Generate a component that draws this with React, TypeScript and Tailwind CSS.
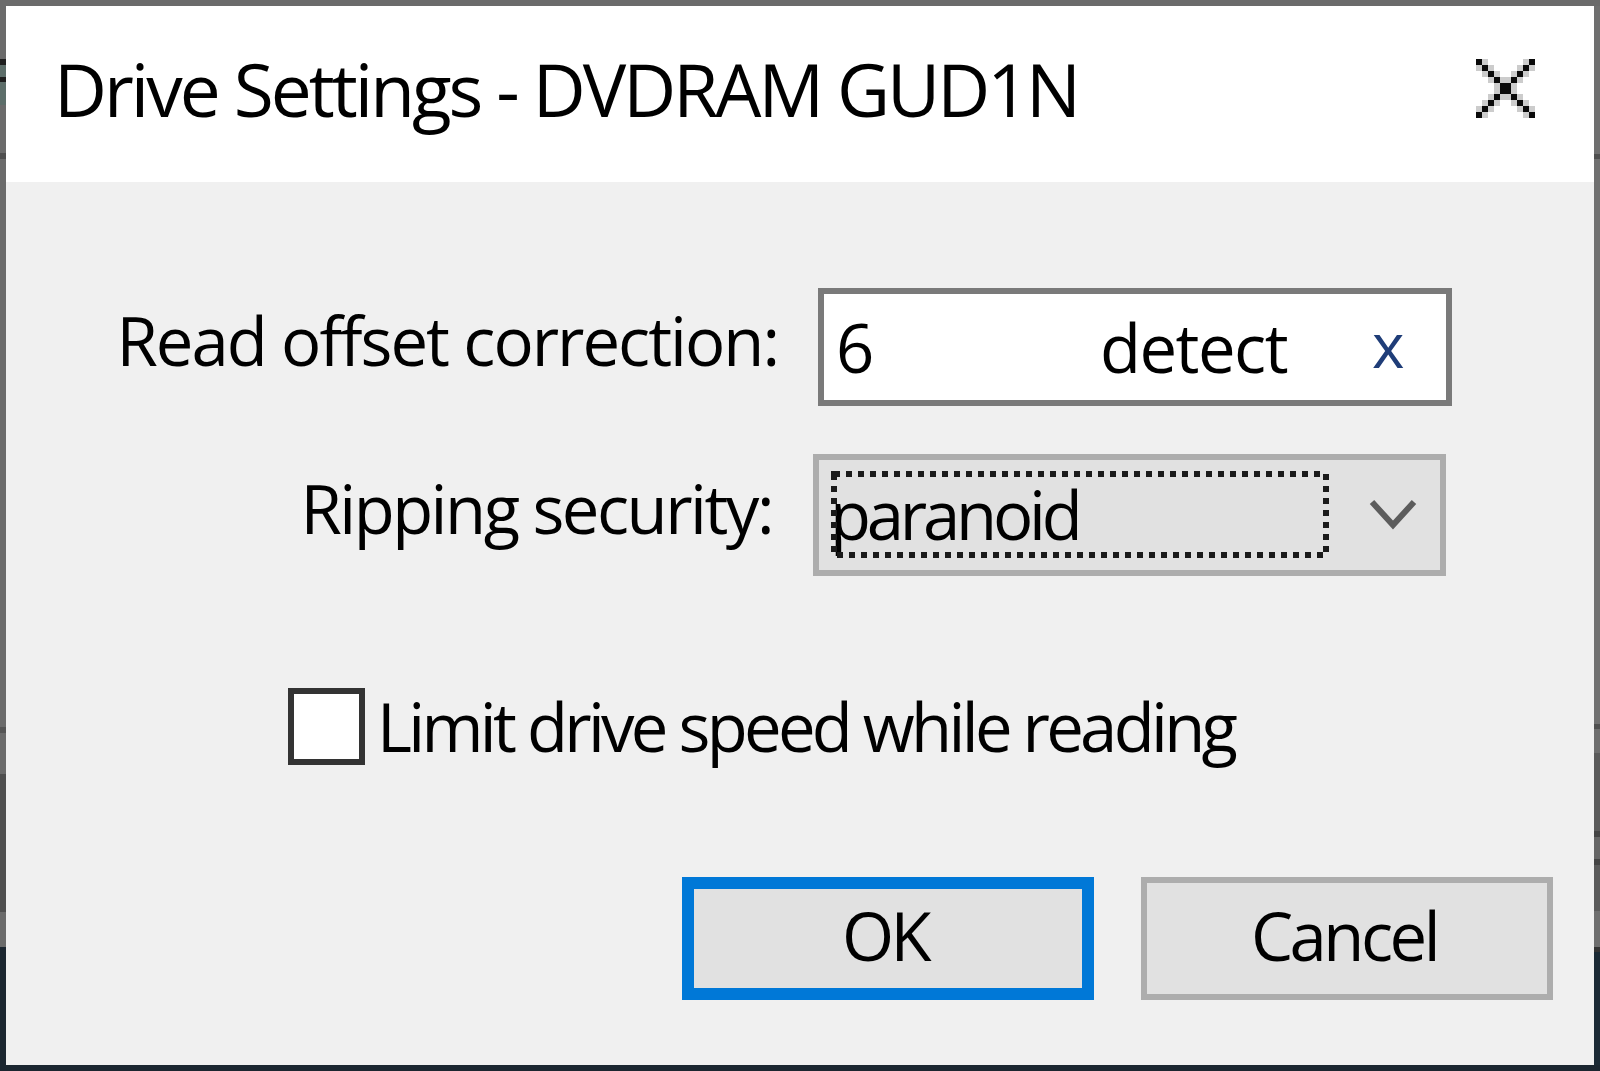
import React from "react";

function CloseX() {
  const black: [number, number][] = [];
  for (let i = 0; i < 10; i++) {
    black.push([i, i]);
    black.push([9 - i, i]);
  }
  const gray: [number, number][] = [];
  black.forEach(([x, y]) => {
    if (x - 1 >= 0) gray.push([x - 1, y]);
    if (x + 1 <= 9) gray.push([x + 1, y]);
  });
  return (
    <svg width="59" height="59" viewBox="0 0 10 10" shapeRendering="crispEdges">
      {gray.map(([x, y], i) => (
        <rect key={"g" + i} x={x} y={y} width="1" height="1" fill="#cccccc" />
      ))}
      {black.map(([x, y], i) => (
        <rect key={"b" + i} x={x} y={y} width="1" height="1" fill="#0a0a0a" />
      ))}
    </svg>
  );
}

function Chevron() {
  return (
    <svg width="48" height="32" viewBox="0 0 48 32">
      <polyline points="3,3 24,26 45,3" fill="none" stroke="#5c5c5c" strokeWidth="6" strokeLinejoin="miter" />
    </svg>
  );
}

export default function App() {
  return (
    <div className="w-[1600px] h-[1071px] flex flex-col overflow-hidden font-['Open_Sans','Noto_Sans',sans-serif] text-black">
      <div className="h-[6px] flex-none bg-[#6b6b6b]" />
      <div className="flex-1 flex flex-row min-h-0">
        {/* left strip */}
        <div className="w-[6px] flex-none flex flex-col">
          <div className="h-[53px] flex-none bg-[#6b6b6b]" />
          <div className="h-[6px] flex-none bg-[#1f1f1f]" />
          <div className="h-[12px] flex-none bg-[#5d6e6a]" />
          <div className="h-[5px] flex-none bg-[#1f1f1f]" />
          <div className="h-[23px] flex-none bg-[#5d6e6a]" />
          <div className="h-[48px] flex-none bg-[#6b6b6b]" />
          <div className="h-[6px] flex-none bg-[#4f4f4f]" />
          <div className="h-[568px] flex-none bg-[#6b6b6b]" />
          <div className="h-[6px] flex-none bg-[#555555]" />
          <div className="h-[41px] flex-none bg-[#6b6b6b]" />
          <div className="h-[138px] flex-none bg-[#4f4f4f]" />
          <div className="h-[35px] flex-none bg-[#6b6b6b]" />
          <div className="flex-1 bg-[#1b2630]" />
        </div>

        {/* dialog */}
        <div className="flex-1 flex flex-col min-w-0">
          <div className="h-[176px] flex-none bg-white flex flex-row items-start">
            <div className="pl-[48px] pt-[46px] text-[73px] leading-none tracking-[-3px] whitespace-nowrap">
              Drive Settings - DVDRAM GUD1N
            </div>
            <div className="ml-auto mr-[59px] mt-[53px]">
              <CloseX />
            </div>
          </div>

          <div className="flex-1 bg-[#f0f0f0] flex flex-col">
            {/* row 1 */}
            <div className="mt-[106px] h-[118px] flex flex-row items-center">
              <div className="w-[772px] text-right text-[67px] leading-none tracking-[-2px] whitespace-nowrap pb-[14px]">
                Read offset correction:
              </div>
              <div className="ml-[40px] w-[634px] h-[118px] border-[6px] border-[#7a7a7a] bg-white flex flex-row items-center text-[67px] leading-none whitespace-nowrap">
                <span className="pl-[12px] w-[276px] flex-none">6</span>
                <span className="w-[272px] flex-none tracking-[-1.5px]">detect</span>
                <span className="text-[62px] text-[#1f3d78] pb-[6px]">x</span>
              </div>
            </div>

            {/* row 2 */}
            <div className="mt-[48px] h-[122px] flex flex-row items-center">
              <div className="w-[766px] text-right text-[67px] leading-none tracking-[-2.5px] whitespace-nowrap pb-[14px]">
                Ripping security:
              </div>
              <div className="ml-[41px] w-[633px] h-[122px] border-[6px] border-[#adadad] bg-[#e1e1e1] relative flex flex-row items-center">
                <span className="pl-[11px] text-[67px] leading-none tracking-[-4.2px] whitespace-nowrap pb-[2px]">paranoid</span>
                <svg className="absolute left-[12px] top-[11px]" width="498" height="87" shapeRendering="crispEdges">
                  <rect x="3" y="3" width="492" height="81" fill="none" stroke="#1a1a1a" strokeWidth="6" strokeDasharray="6 6" />
                </svg>
                <div className="absolute left-[550px] top-[39px]">
                  <Chevron />
                </div>
              </div>
            </div>

            {/* row 3 */}
            <div className="mt-[112px] h-[77px] flex flex-row items-center pl-[282px]">
              <div className="w-[77px] h-[77px] flex-none border-[6px] border-[#333333] bg-white" />
              <div className="ml-[12px] text-[67px] leading-none tracking-[-3.7px] whitespace-nowrap">
                Limit drive speed while reading
              </div>
            </div>

            {/* row 4 */}
            <div className="mt-[112px] flex flex-row pl-[676px]">
              <div className="w-[412px] h-[123px] border-[12px] border-[#0078d7] bg-[#e1e1e1] flex items-center justify-center text-[67px] leading-none tracking-[-3.5px] pb-[6px] pr-[6px]">
                OK
              </div>
              <div className="ml-[47px] w-[412px] h-[123px] border-[6px] border-[#adadad] bg-[#e1e1e1] flex items-center justify-center text-[67px] leading-none tracking-[-3.5px] pb-[6px] pr-[6px]">
                Cancel
              </div>
            </div>
          </div>
        </div>

        {/* right strip */}
        <div className="w-[6px] flex-none flex flex-col">
          <div className="h-[148px] flex-none bg-[#6f6f6f]" />
          <div className="h-[5px] flex-none bg-[#4f4f4f]" />
          <div className="h-[565px] flex-none bg-[#707070]" />
          <div className="h-[5px] flex-none bg-[#4f4f4f]" />
          <div className="h-[24px] flex-none bg-[#6e6e6e]" />
          <div className="h-[78px] flex-none bg-[#5a5a5a]" />
          <div className="h-[6px] flex-none bg-[#444444]" />
          <div className="h-[22px] flex-none bg-[#666666]" />
          <div className="h-[6px] flex-none bg-[#444444]" />
          <div className="h-[46px] flex-none bg-[#5a5a5a]" />
          <div className="h-[36px] flex-none bg-[#6e6e6e]" />
          <div className="h-[5px] flex-none bg-[#333333]" />
          <div className="flex-1 bg-[#1b2a35]" />
        </div>
      </div>
      <div className="h-[6px] flex-none bg-[#1b2630]" />
    </div>
  );
}
